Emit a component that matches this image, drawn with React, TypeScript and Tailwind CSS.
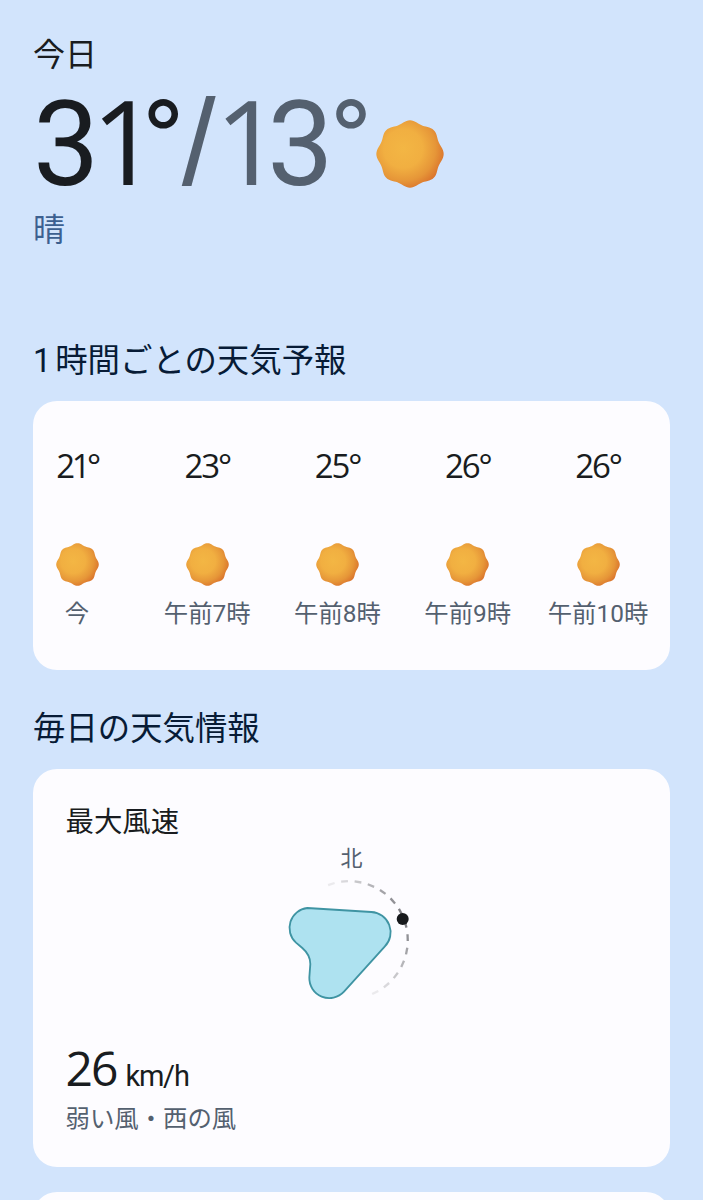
import clsx from 'clsx';

interface HourItem {
  label: string;
  temp: string;
}

const HOURS: HourItem[] = [
  { label: '今', temp: '21' },
  { label: '午前7時', temp: '23' },
  { label: '午前8時', temp: '25' },
  { label: '午前9時', temp: '26' },
  { label: '午前10時', temp: '26' },
];

// wavy disc with eight soft lobes
const SUN_POINTS = Array.from({ length: 120 }, (_, i) => {
  const a = (i / 120) * Math.PI * 2;
  const r = 97 + 4 * Math.cos(8 * a);
  return `${(102 + r * Math.cos(a)).toFixed(1)},${(102 + r * Math.sin(a)).toFixed(1)}`;
}).join(' ');

function Sun({ id, className }: { id: string; className: string }) {
  return (
    <svg viewBox="0 0 204 204" className={clsx('shrink-0', className)}>
      <defs>
        <radialGradient id={id} cx="0.4" cy="0.42" r="0.64">
          <stop offset="0" stopColor="#f3b644" />
          <stop offset="0.45" stopColor="#f1af41" />
          <stop offset="0.75" stopColor="#e69638" />
          <stop offset="1" stopColor="#d9702b" />
        </radialGradient>
      </defs>
      <polygon points={SUN_POINTS} fill={`url(#${id})`} />
    </svg>
  );
}

function WindCompass() {
  return (
    <svg viewBox="0 0 160 135" className="w-[160px] h-[135px] shrink-0 mr-[4px]">
      {Array.from({ length: 14 }, (_, i) => {
        const angle = -17.5 + 13.15 * i;
        return (
          <line
            key={i}
            x1="75.6"
            x2="82.4"
            y1="11.3"
            y2="11.3"
            stroke="#77777c"
            strokeWidth="2.3"
            opacity={Math.max(0.12, 1 - Math.abs(angle - 68) / 98)}
            transform={`rotate(${angle} 79 70)`}
          />
        );
      })}
      <path
        transform="translate(0 -30) scale(0.33333)"
        d="M112 204 L304 216 A61 61 0 0 1 344 320 L222 455 A60 60 0 0 1 118 412 L121 372 C121 350 112 337 97 324 L78 308 A60 60 0 0 1 112 204 Z"
        fill="#aee2f0"
        stroke="#3f94a3"
        strokeWidth="5.5"
        strokeLinejoin="round"
      />
      <circle cx="132.7" cy="49" r="6" fill="#17191c" />
    </svg>
  );
}

export default function App() {
  return (
    <div className="h-[1200px] overflow-hidden bg-[#d2e4fc] px-[33px] pt-[34px] font-[Roboto,'Noto_Sans_CJK_JP',sans-serif] text-[#191c20]">
      {/* ---------------- Today ---------------- */}
      <section className="h-[310px]">
        <h1 className="text-[32px] leading-[42px]">今日</h1>
        <div className="flex h-[126px] items-center">
          <div className="pt-[7px] font-['Open_Sans'] text-[118px] leading-[108px] whitespace-nowrap font-medium">
            <span className="font-[Roboto] font-normal">3</span>
            <span className="-ml-[8px]">1</span>
            <span className="-ml-[16px] font-[Inter] font-normal text-[90px] leading-none align-[20px]">°</span>
            <span className="text-[#54606f]">
              <span className="-ml-[2px] font-['Liberation_Sans'] text-[122px] leading-none font-normal">/</span>
              <span className="-ml-[1px]">1</span>
              <span className="-ml-[15px] font-[Roboto] font-normal">3</span>
              <span className="-ml-[3px] font-[Inter] font-normal text-[90px] leading-none align-[20px]">°</span>
            </span>
          </div>
          <Sun id="sun-today" className="w-[68px] h-[68px] ml-[4px] mt-[30px]" />
        </div>
        <p className="mt-[7px] text-[32px] leading-[42px] text-[#3c6090]">晴</p>
      </section>

      {/* ---------------- Hourly forecast ---------------- */}
      <h2 className="flex gap-[4px] h-[57px] text-[32.4px] leading-[34px] text-[#071b36]">
        <span>1</span>
        <span>時間ごとの天気予報</span>
      </h2>
      <section className="flex gap-[42.25px] h-[269px] rounded-[24px] bg-[#fdfcff]">
        {HOURS.map((hour, i) => (
          <div key={hour.label} className="flex flex-col items-center w-[88px] shrink-0 pt-[45px]">
            <div
              className={clsx(
                "font-['Open_Sans'] text-[33px] leading-[40px]",
                hour.temp.endsWith('1') ? 'tracking-[-3.5px]' : 'tracking-[-2.1px]'
              )}
            >
              {hour.temp}°
            </div>
            <Sun id={`sun-hour-${i}`} className="w-[43px] h-[43px] mt-[57px]" />
            <span className="mt-[11px] text-[24.4px] leading-[34px] whitespace-nowrap text-[#54606f]">{hour.label}</span>
          </div>
        ))}
      </section>

      {/* ---------------- Daily conditions ---------------- */}
      <h2 className="pt-[42px] h-[99px] text-[32.4px] leading-[34px] text-[#071b36]">毎日の天気情報</h2>
      <section className="h-[398px] rounded-[24px] bg-[#fdfcff] px-[32.5px] pt-[36px]">
        <h3 className="text-[28.4px] leading-[36px]">最大風速</h3>
        <div className="flex flex-col items-center h-[199px]">
          <span className="text-[22px] leading-[36px] text-[#54606f]">北</span>
          <div className="-mt-[7px]">
            <WindCompass />
          </div>
        </div>
        <div className="flex items-baseline gap-[9px] leading-[56px]">
          <span className="font-['Open_Sans'] text-[48px] tracking-[-2px]">26</span>
          <span className="text-[29px] tracking-[-1.2px]">km/h</span>
        </div>
        <p className="-mt-[3px] text-[24.4px] leading-[36px] text-[#54606f]">弱い風・西の風</p>
      </section>
      <section className="mt-[25px] h-[120px] rounded-[24px] bg-[#fdfcff]" />
    </div>
  );
}
